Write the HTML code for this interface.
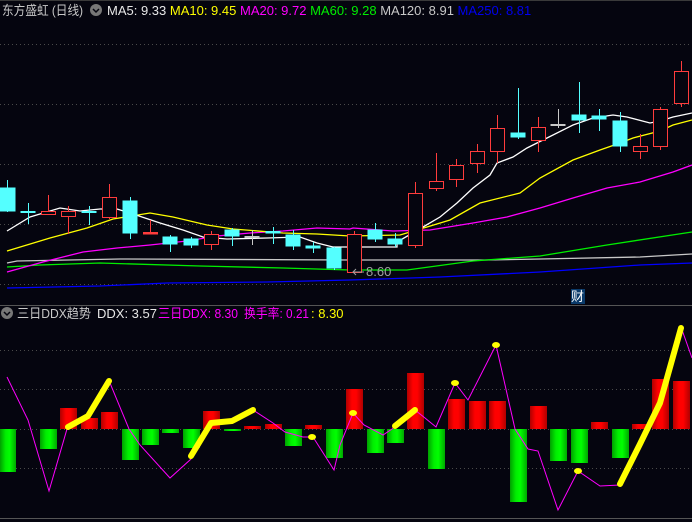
<!DOCTYPE html>
<html><head><meta charset="utf-8"><style>
html,body{margin:0;padding:0;background:#05050f;width:692px;height:522px;overflow:hidden}
svg{display:block}
text{font-family:"Liberation Sans","Noto Sans CJK SC",sans-serif;font-size:13px}
</style></head><body>
<svg width="692" height="522" viewBox="0 0 692 522" xmlns="http://www.w3.org/2000/svg">
<rect width="692" height="522" fill="#05050f"/>
<rect x="0" y="0" width="692" height="1" fill="#3a3a3a"/>
<g stroke="#4a4a4a" stroke-dasharray="1,3" stroke-width="1">
<line x1="0" y1="44.5" x2="692" y2="44.5"/><line x1="0" y1="104.5" x2="692" y2="104.5"/>
<line x1="0" y1="164.5" x2="692" y2="164.5"/><line x1="0" y1="224.5" x2="692" y2="224.5"/>
<line x1="0" y1="284.5" x2="692" y2="284.5"/>
<line x1="0" y1="350.5" x2="692" y2="350.5"/><line x1="0" y1="389.5" x2="692" y2="389.5"/>
<line x1="0" y1="429.5" x2="692" y2="429.5"/><line x1="0" y1="468.5" x2="692" y2="468.5"/>
</g>
<line x1="0" y1="305.5" x2="692" y2="305.5" stroke="#555" stroke-width="1"/>
<line x1="0" y1="518.5" x2="692" y2="518.5" stroke="#555" stroke-width="1"/>

<g fill="none" stroke-width="1.3">
<polyline stroke="#0000ff" points="7,288 100,286 167,283 267,282 350,280 440,277 540,272 640,265 692,263"/>
<polyline stroke="#c8c8c8" points="7,263 17,261 120,259 350,260 487,260 540,259 640,257 692,254"/>
<polyline stroke="#00ee00" points="7,267 40,265 100,263 200,266 283,268 350,270 407,270 473,261 540,256 607,245 692,232"/>
<polyline stroke="#ff00ff" points="7,272 43,262 83,252 117,248 150,245 187,241 217,236 250,233 283,231 317,228 350,229 353,228 393,231 430,230 473,223 507,217 540,208 573,198 607,188 640,182 673,172 692,165"/>
<polyline stroke="#ffff00" points="7,251 50,238 87,228 113,219 150,213 173,217 207,225 233,229 283,233 317,234 350,236 400,235 427,227 450,220 480,203 520,193 540,178 573,160 600,150 620,143 633,138 660,131 673,125 692,120"/>
<polyline stroke="#ffffff" points="7,231 30,217 60,208 80,211 100,209 117,209 133,214 160,223 183,230 203,237 227,239 267,238 300,237 317,243 333,247 350,247 397,247 397,242 423,227 440,217 457,203 473,188 490,175 497,163 513,157 527,148 547,138 573,125 593,118 613,115 627,117 650,123 660,121 673,117 692,113"/>
</g>

<g stroke-width="1">
<g stroke="#54ffff" fill="#54ffff">
<line x1="7.5" y1="180" x2="7.5" y2="212"/><rect x="0" y="188" width="15" height="23"/>
<line x1="28.5" y1="203" x2="28.5" y2="224"/><rect x="21" y="211.5" width="14" height="1"/>
<line x1="89.5" y1="206" x2="89.5" y2="225"/><rect x="82" y="211.5" width="14" height="1"/>
<line x1="130.5" y1="197" x2="130.5" y2="239"/><rect x="123" y="201" width="14" height="32"/>
<line x1="170.5" y1="235" x2="170.5" y2="252"/><rect x="163" y="237" width="14" height="7"/>
<line x1="191.5" y1="237" x2="191.5" y2="248"/><rect x="184" y="239" width="14" height="6"/>
<line x1="232.5" y1="228" x2="232.5" y2="246"/><rect x="225" y="230" width="14" height="6"/>
<line x1="273.5" y1="227" x2="273.5" y2="244"/><rect x="266" y="231.5" width="14" height="1.5"/>
<line x1="293.5" y1="230" x2="293.5" y2="250"/><rect x="286" y="235" width="14" height="11"/>
<line x1="313.5" y1="242" x2="313.5" y2="253"/><rect x="306" y="246" width="14" height="2"/>
<line x1="334.5" y1="247" x2="334.5" y2="270"/><rect x="327" y="248" width="14" height="20"/>
<line x1="375.5" y1="223" x2="375.5" y2="242"/><rect x="368" y="230" width="14" height="9"/>
<line x1="395.5" y1="233" x2="395.5" y2="247"/><rect x="388" y="239" width="14" height="5"/>
<line x1="518.5" y1="88" x2="518.5" y2="139"/><rect x="511" y="133" width="14" height="4"/>
<line x1="579.5" y1="82" x2="579.5" y2="133"/><rect x="572" y="115" width="14" height="5"/>
<line x1="599.5" y1="109" x2="599.5" y2="131"/><rect x="592" y="116" width="14" height="3"/>
<line x1="620.5" y1="112" x2="620.5" y2="152"/><rect x="613" y="121" width="14" height="25"/>
</g>
<g stroke="#c8c8c8" fill="#c8c8c8">
<line x1="252.5" y1="230" x2="252.5" y2="245"/><rect x="245" y="236.5" width="14" height="1"/>
<line x1="558.5" y1="109" x2="558.5" y2="128"/><rect x="551" y="124.5" width="14" height="1"/>
</g>
<g stroke="#ff3c3c" fill="#05050f">
<line x1="48.5" y1="195" x2="48.5" y2="215"/><rect x="41.5" y="211.5" width="14" height="3"/>
<line x1="68.5" y1="206" x2="68.5" y2="234"/><rect x="61.5" y="211.5" width="14" height="5"/>
<line x1="109.5" y1="184" x2="109.5" y2="219"/><rect x="102.5" y="197.5" width="14" height="20"/>
<line x1="150.5" y1="220" x2="150.5" y2="234"/><rect x="143.5" y="232.5" width="14" height="1.5" fill="#ff3c3c"/>
<line x1="211.5" y1="231" x2="211.5" y2="250"/><rect x="204.5" y="234.5" width="14" height="10"/>
<line x1="354.5" y1="231" x2="354.5" y2="273"/><rect x="347.5" y="234.5" width="14" height="38"/>
<line x1="415.5" y1="182" x2="415.5" y2="248"/><rect x="408.5" y="193.5" width="14" height="52"/>
<line x1="436.5" y1="153" x2="436.5" y2="191"/><rect x="429.5" y="181.5" width="14" height="7"/>
<line x1="456.5" y1="159" x2="456.5" y2="187"/><rect x="449.5" y="165.5" width="14" height="14"/>
<line x1="477.5" y1="144" x2="477.5" y2="173"/><rect x="470.5" y="151.5" width="14" height="12"/>
<line x1="497.5" y1="115" x2="497.5" y2="163"/><rect x="490.5" y="128.5" width="14" height="23"/>
<line x1="538.5" y1="117" x2="538.5" y2="152"/><rect x="531.5" y="127.5" width="14" height="13"/>
<line x1="640.5" y1="134" x2="640.5" y2="159"/><rect x="633.5" y="146.5" width="14" height="5"/>
<line x1="660.5" y1="107" x2="660.5" y2="150"/><rect x="653.5" y="109.5" width="14" height="37"/>
<line x1="681.5" y1="61" x2="681.5" y2="107"/><rect x="674.5" y="71.5" width="14" height="32"/>
</g>
</g>
<text x="366" y="276" fill="#a0a0a0" font-size="12">8.60</text>
<line x1="353" y1="272" x2="364" y2="272" stroke="#a0a0a0"/>
<path d="M356,269 L353,272 L356,275" fill="none" stroke="#a0a0a0"/>
<rect x="571" y="289" width="14" height="15" fill="#0a3a6a"/>
<text x="571" y="301" fill="#ffffff" font-size="12">财</text>

<text x="2" y="15" fill="#c8c8c8" textLength="81" lengthAdjust="spacingAndGlyphs">东方盛虹 (日线)</text>
<circle cx="96" cy="10" r="6" fill="#777"/><path d="M93,9 L96,12 L99,9" stroke="#05050f" stroke-width="1.5" fill="none"/>
<text x="107" y="15"><tspan fill="#e8e8e8">MA5: 9.33 </tspan><tspan fill="#ffff00">MA10: 9.45 </tspan><tspan fill="#ff00ff">MA20: 9.72 </tspan><tspan fill="#00ee00">MA60: 9.28 </tspan><tspan fill="#c8c8c8">MA120: 8.91 </tspan><tspan fill="#0000ee">MA250: 8.81</tspan></text>

<text x="17" y="318" fill="#c8c8c8" textLength="74" lengthAdjust="spacingAndGlyphs">三日DDX趋势</text>
<circle cx="7" cy="313" r="6" fill="#777"/><path d="M4,312 L7,315 L10,312" stroke="#05050f" stroke-width="1.5" fill="none"/>
<text x="97" y="318" fill="#e8e8e8">DDX: 3.57</text>
<text x="158" y="318" fill="#ff00ff" textLength="80" lengthAdjust="spacingAndGlyphs">三日DDX: 8.30</text>
<text x="244" y="318" fill="#ff00ff" textLength="65" lengthAdjust="spacingAndGlyphs">换手率: 0.21</text>
<text x="311" y="318" fill="#ffff00">: 8.30</text>

<defs>
<linearGradient id="gr" x1="0" x2="1"><stop offset="0" stop-color="#00a000"/><stop offset="0.35" stop-color="#00ee00"/><stop offset="0.6" stop-color="#00ff00"/><stop offset="1" stop-color="#00a800"/></linearGradient>
<linearGradient id="rd" x1="0" x2="1"><stop offset="0" stop-color="#b00000"/><stop offset="0.35" stop-color="#ff0000"/><stop offset="0.6" stop-color="#ff0000"/><stop offset="1" stop-color="#b00000"/></linearGradient>
</defs>
<g fill="url(#gr)">
<rect x="0" y="429" width="16" height="43"/>
<rect x="40" y="429" width="17" height="20"/>
<rect x="122" y="429" width="17" height="31"/>
<rect x="142" y="429" width="17" height="16"/>
<rect x="162" y="429" width="17" height="4"/>
<rect x="183" y="429" width="17" height="19"/>
<rect x="224" y="429" width="17" height="2"/>
<rect x="285" y="429" width="17" height="17"/>
<rect x="326" y="429" width="17" height="29"/>
<rect x="367" y="429" width="17" height="24"/>
<rect x="387" y="429" width="17" height="14"/>
<rect x="428" y="429" width="17" height="40"/>
<rect x="510" y="429" width="17" height="73"/>
<rect x="550" y="429" width="17" height="32"/>
<rect x="571" y="429" width="17" height="34"/>
<rect x="612" y="429" width="17" height="29"/>
</g>
<g fill="url(#rd)">
<rect x="60" y="408" width="17" height="21"/>
<rect x="81" y="418" width="17" height="11"/>
<rect x="101" y="412" width="17" height="17"/>
<rect x="203" y="411" width="17" height="18"/>
<rect x="244" y="426" width="17" height="3"/>
<rect x="265" y="424" width="17" height="5"/>
<rect x="305" y="425" width="17" height="4"/>
<rect x="346" y="389" width="17" height="40"/>
<rect x="407" y="373" width="17" height="56"/>
<rect x="448" y="399" width="17" height="30"/>
<rect x="469" y="401" width="17" height="28"/>
<rect x="489" y="401" width="17" height="28"/>
<rect x="530" y="406" width="17" height="23"/>
<rect x="591" y="422" width="17" height="7"/>
<rect x="632" y="424" width="17" height="5"/>
<rect x="652" y="379" width="17" height="50"/>
<rect x="673" y="381" width="17" height="48"/>
</g>
<polyline fill="none" stroke="#ff00ff" stroke-width="1" points="7,377 28,420 49,491 67,429 88,416 110,383 129,429 140,445 170,478 191,459 211,423 232,421 253,410 273,423 285,432 303,437 313,437 334,470 340,445 353,413 364,425 383,435 395,427 415,410 425,418 436,427 455,383 468,400 496,345 515,429 528,449 538,451 558,510 578,471 600,486 620,485 660,403 681,327 692,358"/>
<g fill="none" stroke="#ffff00" stroke-width="6" stroke-linecap="round" stroke-linejoin="round">
<polyline points="68,427 88,416 109,381"/>
<polyline points="191,456 211,423 232,421 253,410"/>
<polyline points="395,426 415,410"/>
<polyline points="620,484 640,444 660,403 681,328"/>
</g>
<g fill="#ffff00">
<ellipse cx="312" cy="437" rx="4" ry="3"/>
<ellipse cx="353" cy="413" rx="4" ry="3"/>
<ellipse cx="455" cy="383" rx="4" ry="3"/>
<ellipse cx="496" cy="345" rx="4" ry="3"/>
<ellipse cx="578" cy="471" rx="4" ry="3"/>
</g>
</svg>
</body></html>
